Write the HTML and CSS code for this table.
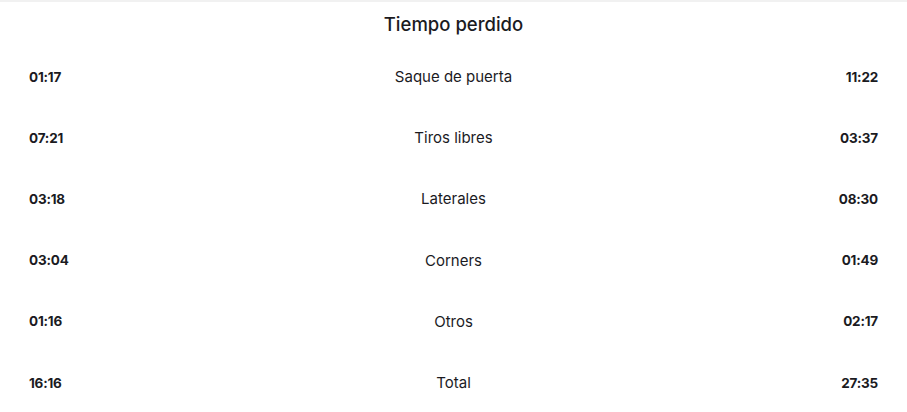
FILE: index.html
```html
<!DOCTYPE html>
<html lang="es">
<head>
<meta charset="utf-8">
<link rel="stylesheet" href="styles.css">
</head>
<body>
<section class="card">
  <h2 class="title">Tiempo perdido</h2>
  <div class="rows">
    <div class="row"><span class="val">01:17</span><span class="label">Saque de puerta</span><span class="val right">11:22</span></div>
    <div class="row"><span class="val">07:21</span><span class="label">Tiros libres</span><span class="val right">03:37</span></div>
    <div class="row"><span class="val">03:18</span><span class="label">Laterales</span><span class="val right">08:30</span></div>
    <div class="row"><span class="val">03:04</span><span class="label">Corners</span><span class="val right">01:49</span></div>
    <div class="row"><span class="val">01:16</span><span class="label">Otros</span><span class="val right">02:17</span></div>
    <div class="row"><span class="val">16:16</span><span class="label">Total</span><span class="val right">27:35</span></div>
  </div>
</section>
</body>
</html>
```
FILE: styles.css
```css
html, body {
  margin: 0;
  padding: 0;
  background: #fff;
}
body {
  font-family: "Inter", "Roboto", sans-serif;
  color: #1b1b1f;
}
.card {
  border-top: 2px solid #f1f1f1;
  padding: 0 29px 0 29px;
}
.title {
  margin: 0;
  padding-top: 10px;
  height: 34px;
  font-size: 18.5px;
  font-weight: 500;
  text-align: center;
  line-height: 24px;
}
.rows {
  display: flex;
  flex-direction: column;
}
.row {
  display: grid;
  grid-template-columns: 100px 1fr 100px;
  align-items: center;
  height: 61.2px;
}
.val {
  font-size: 13.5px;
  font-weight: 700;
  letter-spacing: -0.2px;
}
.right {
  text-align: right;
}
.label {
  text-align: center;
  font-size: 15px;
  font-weight: 400;
}
```
